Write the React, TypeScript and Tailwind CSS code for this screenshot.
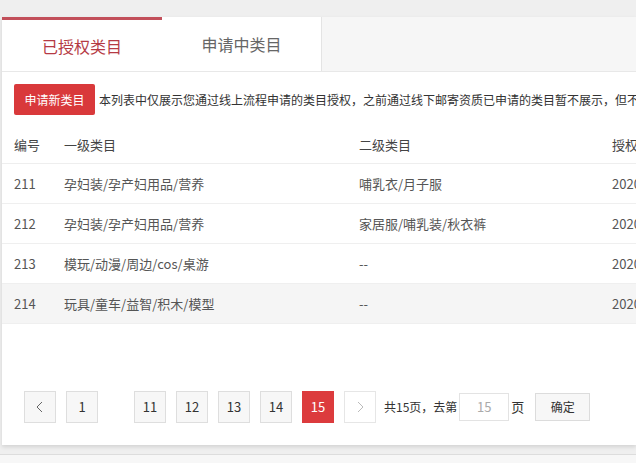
import React from "react";

const font = "font-['Microsoft_YaHei','Noto_Sans_CJK_SC',sans-serif]";

const rows = [
  { id: "211", first: "孕妇装/孕产妇用品/营养", second: "哺乳衣/月子服", date: "2020-03-12" },
  { id: "212", first: "孕妇装/孕产妇用品/营养", second: "家居服/哺乳装/秋衣裤", date: "2020-03-12" },
  { id: "213", first: "模玩/动漫/周边/cos/桌游", second: "--", date: "2020-03-12" },
  { id: "214", first: "玩具/童车/益智/积木/模型", second: "--", date: "2020-03-12" },
];

function PageBox({ children, active }: { children: React.ReactNode; active?: boolean }) {
  return (
    <div
      className={
        active
          ? "w-8 h-8 flex items-center justify-center bg-[#dc3b3d] text-white text-[13px]"
          : "w-8 h-8 flex items-center justify-center bg-[#f7f7f7] border border-[#dedede] text-[#333] text-[13px]"
      }
    >
      {children}
    </div>
  );
}

export default function App() {
  return (
    <div className={`w-[636px] h-[463px] overflow-hidden bg-[#efefef] ${font}`}>
      <div className="h-[17px]" />
      <div className="ml-[2px] w-[634px] h-[428px] bg-white shadow-[0_2px_4px_rgba(0,0,0,0.12)] flex flex-col overflow-hidden">
        {/* tabs */}
        <div className="flex h-[55px] bg-[#f6f6f6] border-b border-[#e8e8e8]">
          <div className="w-[160px] h-full bg-white border-t-[3px] border-[#c24f5a] flex items-center justify-center text-[16px] text-[#b53a44]">
            已授权类目
          </div>
          <div className="w-[160px] h-full bg-white border-r border-[#e4e4e4] flex items-center justify-center text-[16px] text-[#666]">
            申请中类目
          </div>
        </div>

        {/* notice */}
        <div className="flex items-center h-[55px] pl-3 whitespace-nowrap overflow-hidden">
          <button className="h-[31px] w-[81px] rounded-[2px] bg-[#d9393b] text-white text-[12px] shrink-0">
            申请新类目
          </button>
          <span className="ml-1 text-[12px] text-[#333] shrink-0">
            本列表中仅展示您通过线上流程申请的类目授权，之前通过线下邮寄资质已申请的类目暂不展示，但不影响
          </span>
        </div>

        {/* table */}
        <div className="text-[13px] text-[#555] whitespace-nowrap overflow-hidden">
          <div className="flex items-center h-[37px] border-b border-[#eeeeee] text-[#444]">
            <div className="w-[62px] shrink-0 pl-3">编号</div>
            <div className="w-[295px] shrink-0">一级类目</div>
            <div className="w-[253px] shrink-0">二级类目</div>
            <div className="shrink-0">授权时间</div>
          </div>
          {rows.map((r, i) => (
            <div
              key={r.id}
              className={`flex items-center h-[40px] border-b border-[#efefef] ${i === 3 ? "bg-[#f5f5f5]" : ""}`}
            >
              <div className="w-[62px] shrink-0 pl-3">{r.id}</div>
              <div className="w-[295px] shrink-0">{r.first}</div>
              <div className="w-[253px] shrink-0">{r.second}</div>
              <div className="shrink-0">{r.date}</div>
            </div>
          ))}
        </div>

        <div className="flex-1" />

        {/* pagination */}
        <div className="flex items-center h-[32px] pl-[22px] mb-[22px] whitespace-nowrap">
          <PageBox>
            <svg width="12" height="14" viewBox="0 0 12 14" fill="none" stroke="#666" strokeWidth="1">
              <path d="M8 2 L3 7 L8 12" />
            </svg>
          </PageBox>
          <div className="ml-[10px]">
            <PageBox>1</PageBox>
          </div>
          <div className="w-[36px]" />
          <div className="flex gap-[10px]">
            <PageBox>11</PageBox>
            <PageBox>12</PageBox>
            <PageBox>13</PageBox>
            <PageBox>14</PageBox>
            <PageBox active>15</PageBox>
            <div className="w-8 h-8 flex items-center justify-center border border-[#e6e6e6] bg-white">
              <svg width="12" height="14" viewBox="0 0 12 14" fill="none" stroke="#bbb" strokeWidth="1">
                <path d="M4 2 L9 7 L4 12" />
              </svg>
            </div>
          </div>
          <span className="ml-[8px] text-[12px] text-[#333]">共15页，去第</span>
          <div className="ml-[2px] w-[50px] h-[28px] border border-[#e3e3e3] flex items-center justify-center text-[13px] text-[#aaa]">
            15
          </div>
          <span className="ml-[2px] text-[13px] text-[#333]">页</span>
          <div className="ml-[11px] w-[55px] h-[28px] border border-[#dcdcdc] bg-[#f7f7f7] flex items-center justify-center text-[12px] text-[#333]">
            确定
          </div>
        </div>
      </div>
      <div className="h-[9px]" />
      <div className="h-[9px] border-t border-[#dddddd] bg-[#f7f7f7]" />
    </div>
  );
}
